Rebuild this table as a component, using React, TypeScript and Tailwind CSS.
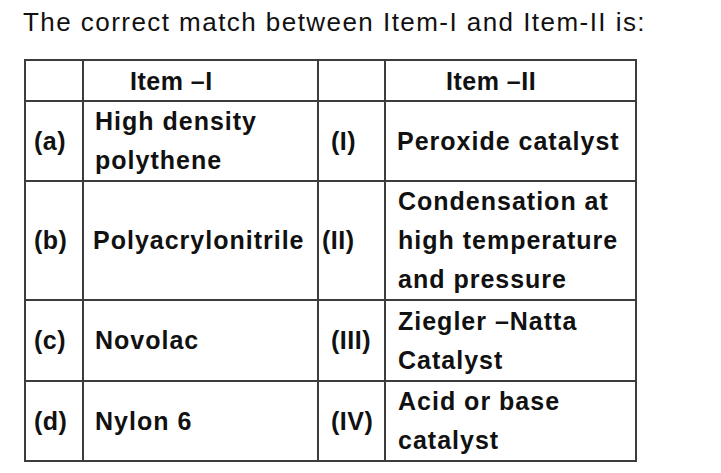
import React from "react";

const cell = "border-2 border-[#3c3c3c] align-middle p-0";

export default function App() {
  return (
    <div
      className="w-[721px] h-[473px] bg-white text-black"
      style={{ fontFamily: '"Liberation Sans", Arial, sans-serif' }}
    >
      <div className="pl-[23px] pt-[5px] text-[26px] leading-[34px] tracking-[1.45px] text-[#111]">
        The correct match between Item-I and Item-II is:
      </div>
      <table className="ml-[24px] mt-[20px] border-collapse table-fixed w-[611px] text-[25px] font-bold leading-[39px] text-[#111] tracking-[1px]">
        <colgroup>
          <col className="w-[58px]" />
          <col className="w-[235px]" />
          <col className="w-[67px]" />
          <col className="w-[251px]" />
        </colgroup>
        <tbody>
          <tr className="h-[41px]">
            <td className={cell}></td>
            <td className={cell}>
              <div className="pl-[46px] leading-[34px] tracking-[0.5px]">Item –I</div>
            </td>
            <td className={cell}></td>
            <td className={cell}>
              <div className="pl-[60px] leading-[34px] tracking-[0.5px]">Item –II</div>
            </td>
          </tr>
          <tr className="h-[80px]">
            <td className={cell}>
              <div className="pl-[8px] tracking-[0.5px]">(a)</div>
            </td>
            <td className={cell}>
              <div className="pl-[11px]">
                High density
                <br />
                polythene
              </div>
            </td>
            <td className={cell}>
              <div className="pl-[12px] tracking-[0.5px]">(I)</div>
            </td>
            <td className={cell}>
              <div className="pl-[11px]">Peroxide catalyst</div>
            </td>
          </tr>
          <tr className="h-[119px]">
            <td className={cell}>
              <div className="pl-[8px] tracking-[0.5px]">(b)</div>
            </td>
            <td className={cell}>
              <div className="pl-[9px]">Polyacrylonitrile</div>
            </td>
            <td className={cell}>
              <div className="pl-[3px] tracking-[0.5px]">(II)</div>
            </td>
            <td className={cell}>
              <div className="pl-[12px]">
                Condensation at
                <br />
                high temperature
                <br />
                and pressure
              </div>
            </td>
          </tr>
          <tr className="h-[81px]">
            <td className={cell}>
              <div className="pl-[8px] tracking-[0.5px]">(c)</div>
            </td>
            <td className={cell}>
              <div className="pl-[11px]">Novolac</div>
            </td>
            <td className={cell}>
              <div className="pl-[12px] tracking-[0.5px]">(III)</div>
            </td>
            <td className={cell}>
              <div className="pl-[12px]">
                Ziegler –Natta
                <br />
                Catalyst
              </div>
            </td>
          </tr>
          <tr className="h-[78px]">
            <td className={cell}>
              <div className="pl-[8px] tracking-[0.5px]">(d)</div>
            </td>
            <td className={cell}>
              <div className="pl-[11px]">Nylon 6</div>
            </td>
            <td className={cell}>
              <div className="pl-[12px] tracking-[0.5px]">(IV)</div>
            </td>
            <td className={cell}>
              <div className="pl-[12px]">
                Acid or base
                <br />
                catalyst
              </div>
            </td>
          </tr>
        </tbody>
      </table>
    </div>
  );
}
